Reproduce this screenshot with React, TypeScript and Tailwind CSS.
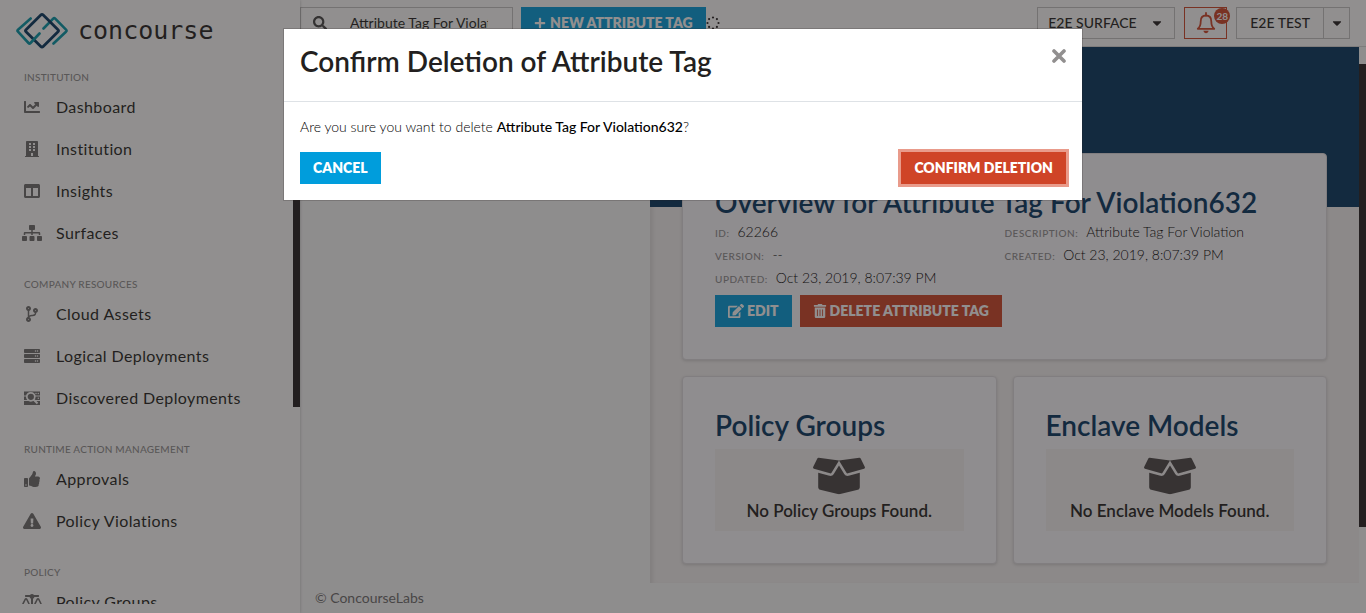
import type { ComponentType, ReactNode } from "react";
import {
  FaBalanceScale,
  FaBoxOpen,
  FaBuilding,
  FaCaretDown,
  FaCodeBranch,
  FaColumns,
  FaEdit,
  FaExclamationTriangle,
  FaPlus,
  FaSearch,
  FaServer,
  FaSitemap,
  FaThumbsUp,
  FaTrashAlt,
} from "react-icons/fa";

type IconType = ComponentType<{ className?: string }>;

function ChartIcon({ className }: { className?: string }) {
  return (
    <svg viewBox="0 0 512 512" fill="currentColor" className={className} aria-hidden="true">
      <path d="M496 384H64V80c0-8.840-7.160-16-16-16H16C7.160 64 0 71.160 0 80v336c0 17.670 14.330 32 32 32h464c8.840 0 16-7.160 16-16v-32c0-8.840-7.160-16-16-16zM464 96H345.940c-21.380 0-32.090 25.850-16.970 40.970l32.400 32.400L288 242.750l-73.370-73.370c-12.500-12.500-32.760-12.500-45.250 0l-68.690 68.690c-6.250 6.250-6.250 16.380 0 22.630l22.620 22.620c6.250 6.250 16.380 6.250 22.630 0L192 237.250l73.370 73.370c12.500 12.500 32.760 12.500 45.250 0l96-96 32.400 32.400c15.120 15.120 40.970 4.410 40.970-16.970V112c.010-8.840-7.150-16-15.990-16z" />
    </svg>
  );
}

function DiscoveredIcon({ className }: { className?: string }) {
  return (
    <svg viewBox="0 0 16 16" className={className} aria-hidden="true">
      <path fill="currentColor" d="M0 1.500h16v4H0zM0 6.500h16v3.500H0zM0 11h16v4H0z" />
      <circle cx="12" cy="3.500" r=".7" fill="white" />
      <circle cx="14.300" cy="3.500" r=".7" fill="white" />
      <circle cx="14.300" cy="8.300" r=".7" fill="white" />
      <circle cx="6.800" cy="6.800" r="4" fill="currentColor" stroke="white" strokeWidth="1.700" />
      <path d="M9.800 9.800l3.700 3.700" stroke="white" strokeWidth="2" />
    </svg>
  );
}

function BellIcon({ className }: { className?: string }) {
  return (
    <svg viewBox="0 0 20 22" fill="none" stroke="currentColor" className={className} aria-hidden="true">
      <path d="M1.800 16.800c2.400-2 2.900-4 2.900-7.400C4.700 5.800 6.800 3.500 10 3.500s5.300 2.300 5.300 5.900c0 3.400.5 5.400 2.900 7.400z" strokeWidth="1.800" strokeLinejoin="round" />
      <path d="M10 1v2.500" strokeWidth="1.800" strokeLinecap="round" />
      <path d="M7.400 18.800h5.200c-.3 1.500-1.300 2.400-2.600 2.400s-2.300-.9-2.600-2.400z" fill="currentColor" stroke="none" />
    </svg>
  );
}

function Logo() {
  return (
    <a href="#home" className="flex h-12 items-center gap-2.5 pt-3.5 pl-4 text-[#231f20]">
      <svg viewBox="0 0 52 36" fill="none" strokeLinecap="round" strokeLinejoin="round" className="h-9 w-[52px] shrink-0" aria-hidden="true">
        <path d="M27.500 15.500L37.200 5.700q1-1 2 0L50 16.700q1 1 0 2L37.500 30.500" stroke="#0097a9" strokeWidth="2.600" />
        <path d="M24.800 2L10 16.700q-1 1 0 2L24.800 33.500q1.200 1.200 2.400 0L42 18.700q1-1 0-2L27.200 2q-1.200-1.200-2.400 0z" stroke="#03355f" strokeWidth="2.800" />
        <path d="M14.700 5.500L2 16.700q-1 1 0 2L12.500 30q1 1 2 0L23.500 20.500" stroke="#0097a9" strokeWidth="2.600" />
      </svg>
      <span className="font-['DejaVu_Sans_Mono',monospace] text-[25px] leading-8">concourse</span>
    </a>
  );
}

const groups: { title: string; items: { label: string; icon: IconType }[] }[] = [
  {
    title: "Institution",
    items: [
      { label: "Dashboard", icon: ChartIcon },
      { label: "Institution", icon: FaBuilding },
      { label: "Insights", icon: FaColumns },
      { label: "Surfaces", icon: FaSitemap },
    ],
  },
  {
    title: "Company Resources",
    items: [
      { label: "Cloud Assets", icon: FaCodeBranch },
      { label: "Logical Deployments", icon: FaServer },
      { label: "Discovered Deployments", icon: DiscoveredIcon },
    ],
  },
  {
    title: "Runtime Action Management",
    items: [
      { label: "Approvals", icon: FaThumbsUp },
      { label: "Policy Violations", icon: FaExclamationTriangle },
    ],
  },
  {
    title: "Policy",
    items: [{ label: "Policy Groups", icon: FaBalanceScale }],
  },
];

function Sidebar() {
  return (
    <aside className="relative z-10 flex h-full w-[300px] shrink-0 flex-col bg-white pb-[9px] shadow-[0_0_3px_rgba(0,0,0,0.25)]">
      <Logo />
      <nav className="flex min-h-0 flex-1 flex-col gap-[21px] overflow-hidden pt-5">
        {groups.map((group) => (
          <section key={group.title} className="shrink-0">
            <h2 className="px-6 text-[10px] leading-[18px] font-medium tracking-wide text-[#8f8f8f] uppercase">
              {group.title}
            </h2>
            <ul>
              {group.items.map(({ label, icon: Icon }) => (
                <li key={label}>
                  <a href="#section" className="flex h-[42px] items-center gap-[14px] px-[22px] text-base tracking-wide text-[#231f20]">
                    <Icon className="h-4 w-5 shrink-0 text-[#6d6d6d]" />
                    {label}
                  </a>
                </li>
              ))}
            </ul>
          </section>
        ))}
      </nav>
      <div className="absolute top-16 right-0 h-[343px] w-[7px] bg-[#231f20]" />
    </aside>
  );
}

function Spinner() {
  return (
    <svg viewBox="0 0 14 14" fill="#231f20" className="size-3.5" aria-hidden="true">
      <circle cx="7" cy="1.500" r="1.100" />
      <circle cx="10.900" cy="3.100" r="1.100" />
      <circle cx="12.500" cy="7" r="1.100" />
      <circle cx="10.900" cy="10.900" r="1.100" />
      <circle cx="7" cy="12.500" r="1.100" />
      <circle cx="3.100" cy="10.900" r="1.100" />
      <circle cx="1.500" cy="7" r="1.100" />
      <circle cx="3.100" cy="3.100" r="1.100" />
    </svg>
  );
}

function TopBar() {
  return (
    <header className="flex h-[47px] shrink-0 items-center border-b border-[#d8d8d8] bg-white pr-4 text-sm text-[#231f20]">
      <label className="flex h-8 w-[213px] items-center gap-[23px] border border-[#c4c4c4] pr-6 pl-3">
        <FaSearch className="size-3.5 shrink-0 text-[#444]" />
        <input
          type="text"
          aria-label="Search"
          defaultValue="Attribute Tag For Violation632"
          className="w-full min-w-0 bg-transparent text-sm outline-none"
        />
      </label>
      <button type="button" className="ml-2 flex h-8 items-center gap-1 bg-[#009ddc] px-[13px] font-extrabold text-white uppercase">
        <FaPlus className="size-3" />
        New Attribute Tag
      </button>
      <Spinner />
      <div className="ml-auto flex items-center">
        <button type="button" className="flex h-8 w-[138px] items-center justify-between border border-[#c4c4c4] px-2.5 font-medium uppercase">
          E2E Surface
          <FaCaretDown className="size-3.5" />
        </button>
        <button type="button" aria-label="Notifications" className="relative ml-[9px] flex h-8 w-[43px] items-center justify-center border border-[#cf4427] text-[#cf4427]">
          <BellIcon className="h-[22px] w-5" />
          <span className="absolute top-0 -right-1 flex size-4 items-center justify-center rounded-full bg-[#cf4427] text-[10px] leading-4 font-bold text-white">
            28
          </span>
        </button>
        <div className="ml-[9px] flex h-8 items-stretch border border-[#c4c4c4]">
          <button type="button" className="px-[13px] font-medium uppercase">E2E Test</button>
          <button type="button" aria-label="Account menu" className="flex w-[26px] items-center justify-center border-l border-[#c4c4c4]">
            <FaCaretDown className="size-3.5" />
          </button>
        </div>
      </div>
    </header>
  );
}

function Card({ title, className = "", children }: { title: string; className?: string; children: ReactNode }) {
  return (
    <section className={`rounded border border-[#dedde0] bg-[#fbfaff] p-8 shadow-[0_1px_3px_rgba(0,0,0,0.15)] ${className}`}>
      <h2 className="text-[28px] leading-8 font-semibold whitespace-nowrap text-[#03355f]">{title}</h2>
      {children}
    </section>
  );
}

function Field({ label, value }: { label: string; value: string }) {
  return (
    <div className="flex h-[23px] items-baseline gap-2">
      <dt className="text-[10px] font-medium tracking-wider text-[#8f8f8f] uppercase">{label}:</dt>
      <dd className="text-sm leading-[23px] font-light text-black">{value}</dd>
    </div>
  );
}

function EmptyState({ text }: { text: string }) {
  return (
    <div className="mt-2 flex h-[82px] flex-col items-center bg-[#f4f2f2] pt-1">
      <FaBoxOpen className="h-[46px] w-[52px] text-[#4a4647]" />
      <p className="text-[17px] leading-[23px] font-semibold text-[#231f20]">{text}</p>
    </div>
  );
}

function Detail() {
  return (
    <main className="relative min-w-0 flex-1 bg-[#f4f2f2] px-8 pt-[106px] pb-[19px] shadow-[inset_5px_0_5px_-3px_rgba(0,0,0,0.1)]">
      <div className="absolute inset-x-0 top-0 h-40 bg-[#03355f]" />
      <div className="relative grid grid-cols-2 gap-4">
        <Card title="Overview for Attribute Tag For Violation632" className="col-span-2">
          <dl className="mt-0.5 grid grid-cols-2">
            <Field label="ID" value="62266" />
            <Field label="Description" value="Attribute Tag For Violation" />
            <Field label="Version" value="--" />
            <Field label="Created" value="Oct 23, 2019, 8:07:39 PM" />
            <Field label="Updated" value="Oct 23, 2019, 8:07:39 PM" />
          </dl>
          <div className="mt-1.5 flex gap-2 text-sm font-extrabold text-white">
            <button type="button" className="flex h-8 items-center gap-[3px] bg-[#009ddc] px-[13px] uppercase">
              <FaEdit className="size-4" />
              Edit
            </button>
            <button type="button" className="flex h-8 items-center gap-[3px] bg-[#cf4427] px-[13px] uppercase">
              <FaTrashAlt className="size-3.5" />
              Delete Attribute Tag
            </button>
          </div>
        </Card>
        <Card title="Policy Groups">
          <EmptyState text="No Policy Groups Found." />
        </Card>
        <Card title="Enclave Models">
          <EmptyState text="No Enclave Models Found." />
        </Card>
      </div>
    </main>
  );
}

function ConfirmDialog() {
  return (
    <div className="fixed inset-0 z-20 flex items-start justify-center bg-[#231f20]/50 pt-7">
      <div role="dialog" aria-modal="true" aria-labelledby="dialog-title" className="w-full max-w-[800px] border border-[#231f20]/20 bg-white bg-clip-padding text-[#231f20]">
        <header className="flex h-[73px] items-start justify-between border-b border-[#dee2e6] px-4 pt-4">
          <h1 id="dialog-title" className="text-[28px] leading-8 font-semibold">
            Confirm Deletion of Attribute Tag
          </h1>
          <button type="button" aria-label="Close" className="pt-1 text-[#918f8f]">
            <svg viewBox="0 0 14 14" className="size-3.5" stroke="currentColor" strokeWidth="3.600" strokeLinecap="round" aria-hidden="true">
              <path d="M2 2l10 10M12 2L2 12" />
            </svg>
          </button>
        </header>
        <div className="p-4">
          <p className="text-sm leading-[18px] font-light text-black">
            Are you sure you want to delete <strong className="font-medium">Attribute Tag For Violation632</strong>?
          </p>
          <div className="mt-4 flex justify-between text-sm font-extrabold text-white">
            <button type="button" className="h-8 bg-[#009ddc] px-[13px] uppercase">Cancel</button>
            <button type="button" className="h-8 bg-[#cf4427] px-[13px] uppercase ring-3 ring-[#e99b8b]">Confirm Deletion</button>
          </div>
        </div>
      </div>
    </div>
  );
}

export default function App() {
  return (
    <div className="flex h-screen overflow-hidden bg-[#f9fafb] font-[Lato,sans-serif]">
      <Sidebar />
      <div className="relative flex min-w-0 flex-1 flex-col">
        <TopBar />
        <div className="flex min-h-0 pr-[7px]">
          <div className="w-[350px] shrink-0 bg-[#f9fafb]" />
          <Detail />
        </div>
        <footer className="px-[15px] pt-1.5 text-sm leading-[18px] text-[#6d6d6d]">© ConcourseLabs</footer>
        <div className="absolute top-16 right-0 h-[463px] w-[7px] bg-[#231f20]" />
      </div>
      <ConfirmDialog />
    </div>
  );
}
